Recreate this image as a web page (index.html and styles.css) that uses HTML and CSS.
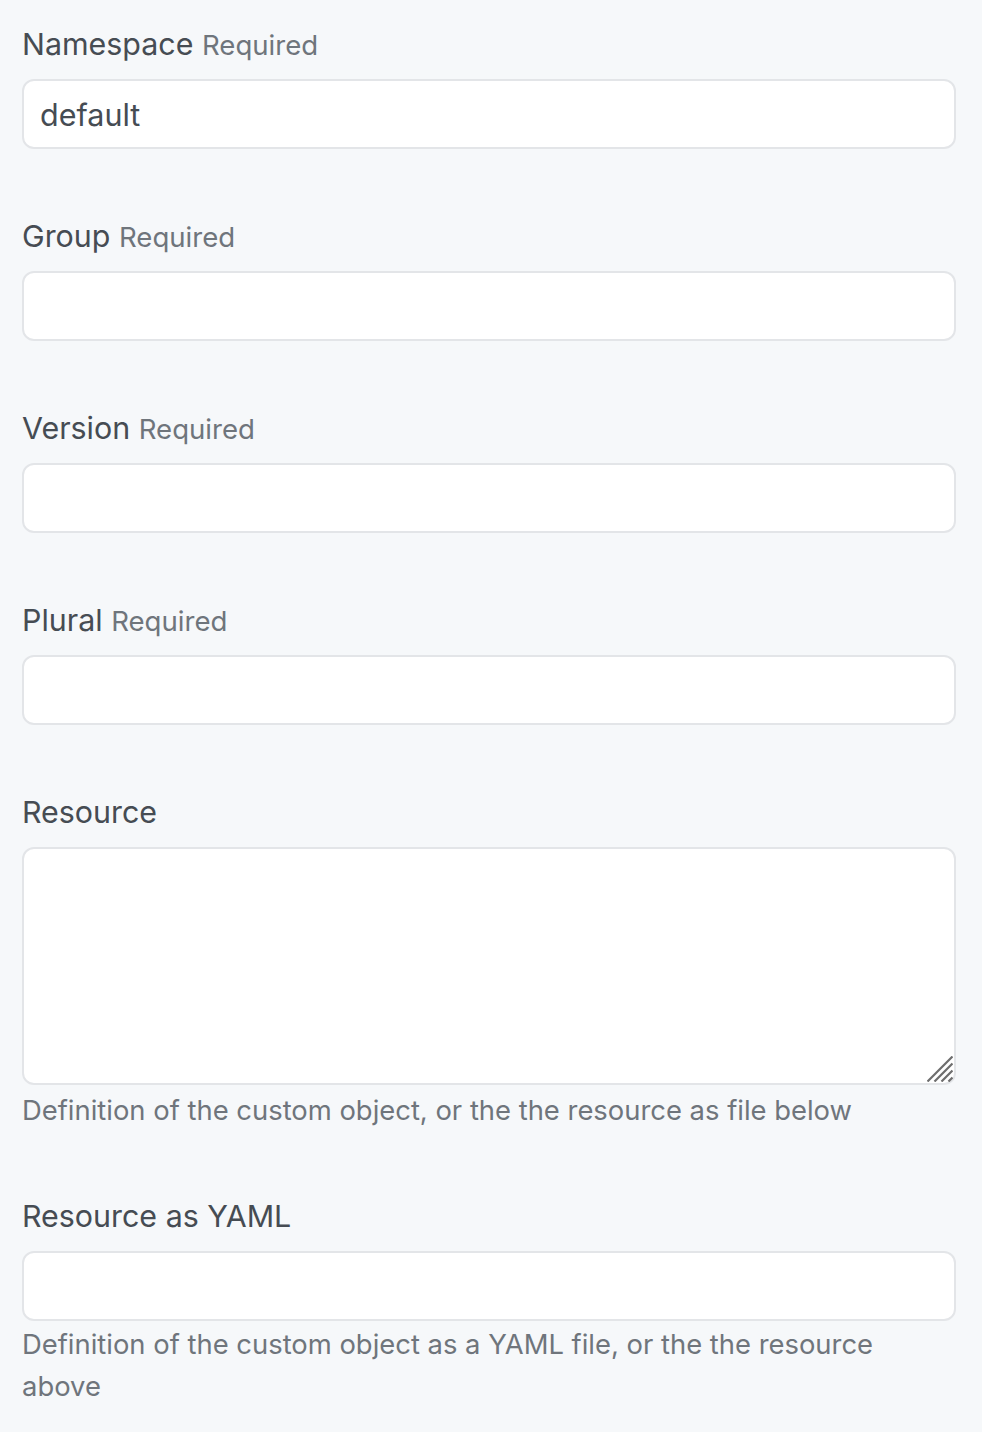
FILE: index.html
```html
<!DOCTYPE html>
<html lang="en">
<head>
<meta charset="utf-8">
<title>Custom object</title>
<link rel="stylesheet" href="styles.css">
</head>
<body>
<form class="form">
  <div class="group">
    <label class="label">Namespace <span class="req">Required</span></label>
    <input class="input" type="text" value="default">
  </div>
  <div class="group">
    <label class="label">Group <span class="req">Required</span></label>
    <input class="input" type="text">
  </div>
  <div class="group">
    <label class="label">Version <span class="req">Required</span></label>
    <input class="input" type="text">
  </div>
  <div class="group">
    <label class="label">Plural <span class="req">Required</span></label>
    <input class="input" type="text">
  </div>
  <div class="group">
    <label class="label">Resource</label>
    <div class="area-wrap">
      <textarea class="area"></textarea>
      <svg class="grip" width="26" height="26" viewBox="0 0 26 26">
        <path d="M0.5 25.5 L25.5 0.5 M7.5 25.5 L25.5 7.5 M14.5 25.5 L25.5 14.5 M21.5 25.5 L25.5 21.5" stroke="#6e6e6e" stroke-width="2.2" fill="none"/>
      </svg>
    </div>
    <p class="help help-first">Definition of the custom object, or the the resource as file below</p>
  </div>
  <div class="group">
    <label class="label">Resource as YAML</label>
    <div class="input file"></div>
    <p class="help help-tight">Definition of the custom object as a YAML file, or the the resource above</p>
  </div>
</form>
</body>
</html>
```

FILE: styles.css
```css
html, body {
  margin: 0;
  padding: 0;
  background: #f6f8fa;
}
body {
  font-family: Inter, "Noto Sans", sans-serif;
  color: #464c53;
  padding: 22px 26px 0 22px;
}
.form {
  display: flex;
  flex-direction: column;
  gap: 65px;
  width: 934px;
}
.group {
  display: flex;
  flex-direction: column;
}
.label {
  font-size: 30.4px;
  line-height: 44px;
  height: 44px;
  color: #464c53;
  margin-bottom: 13px;
}
.req {
  font-size: 27.6px;
  line-height: 1;
  color: #6f757c;
}
.input {
  box-sizing: border-box;
  height: 70px;
  width: 100%;
  border: 2px solid #e3e5e8;
  border-radius: 12px;
  background: #fff;
  padding: 0 16px;
  font-family: Inter, "Noto Sans", sans-serif;
  font-size: 30.5px;
  color: #464c53;
  outline: none;
}
.area-wrap {
  position: relative;
  height: 238px;
}
.area {
  box-sizing: border-box;
  width: 100%;
  height: 100%;
  border: 2px solid #e3e5e8;
  border-radius: 12px;
  background: #fff;
  resize: none;
  outline: none;
  display: block;
}
.grip {
  position: absolute;
  right: 3px;
  bottom: 3px;
}
.help {
  margin: 4px 0 0 0;
  font-size: 27.4px;
  line-height: 42px;
  color: #6f757c;
}
.help-first {
  margin-top: 4px;
  margin-bottom: -2px;
}
.help-tight {
  margin-top: 2px;
}
.file {
  padding: 0;
}
```
